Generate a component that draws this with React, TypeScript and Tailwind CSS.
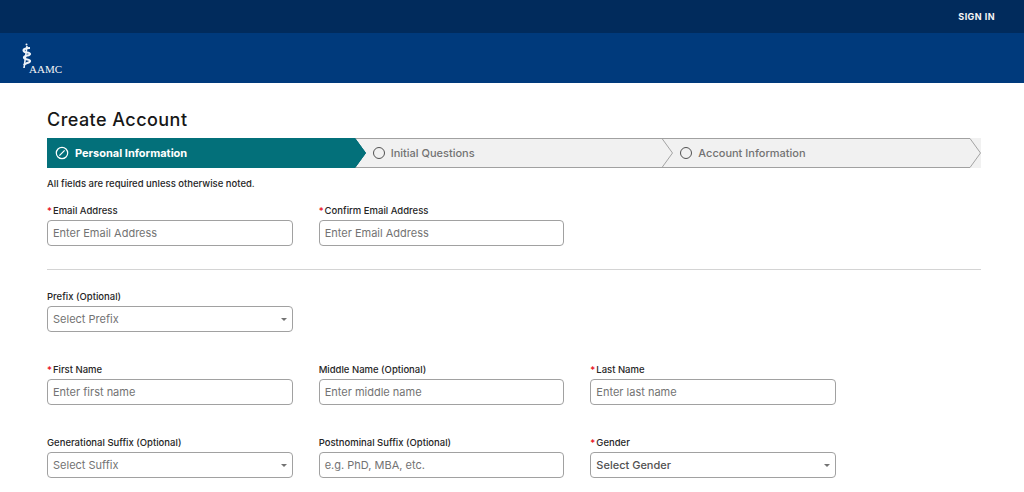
type FieldProps = {
  label: string
  placeholder: string
  required?: boolean
  select?: boolean
  strong?: boolean
}

function Field({ label, placeholder, required, select, strong }: FieldProps) {
  return (
    <div className="flex flex-col gap-0.75">
      <label className="h-3 text-[9.5px] leading-3 font-medium text-neutral-800">
        {required && <span className="mr-px text-red-600">*</span>}
        {label}
      </label>
      <div className="flex h-6.5 items-center justify-between rounded-sm border border-neutral-400 bg-white pr-1.25 pl-1.25">
        <span className={strong ? "text-[11px] font-medium text-neutral-600" : "text-[11px] text-neutral-500"}>{placeholder}</span>
        {select && <span className="h-0 w-0 border-x-[3px] border-t-[3px] border-x-transparent border-t-neutral-500" />}
      </div>
    </div>
  )
}

function Chevron({ fill, stroke }: { fill: string; stroke: string }) {
  return (
    <svg viewBox="0 0 11 30" className="absolute top-0 right-0 h-7.5 w-2.75 translate-x-full" preserveAspectRatio="none">
      <path d="M0 0 L11 15 L0 30 Z" fill={fill} />
      <path d="M0 0.5 L10.5 15 L0 29.5" fill="none" stroke={stroke} strokeWidth="1" />
    </svg>
  )
}

function Step({ label, active }: { label: string; active?: boolean }) {
  if (active) {
    return (
      <div className="relative z-10 flex items-center gap-1.5 bg-[#03707a] pl-2 text-white">
        <svg viewBox="0 0 16 16" className="h-3.5 w-3.5" fill="none" stroke="currentColor" strokeWidth="1.4">
          <circle cx="8" cy="8" r="6.5" />
          <path d="M5 11 L11 5" />
        </svg>
        <span className="text-[11px] font-bold">{label}</span>
        <Chevron fill="#03707a" stroke="#03707a" />
      </div>
    )
  }
  return (
    <div className="relative flex items-center gap-1.5 border-y border-neutral-400 pl-4.5 text-neutral-500">
      <span className="h-3 w-3 rounded-full border border-neutral-600" />
      <span className="text-[11px] font-medium">{label}</span>
      <div className="absolute -top-px right-0">
        <Chevron fill="#f1f1f1" stroke="#a3a3a3" />
      </div>
    </div>
  )
}

export default function App() {
  return (
    <div className="h-[492px] overflow-hidden bg-white font-['Inter',sans-serif]">
      <header className="flex h-8.25 items-center justify-end bg-[#012b5c] pr-7.25">
        <span className="text-[9px] font-bold tracking-wider text-neutral-100">SIGN IN</span>
      </header>
      <div className="h-12.5 bg-[#003a7c]">
        <div className="relative h-full w-16 pt-2.5 pl-5.25">
          <svg viewBox="0 0 12 26" className="h-6.5 w-3" fill="none" stroke="#eef3f9">
            <circle cx="5.5" cy="1.5" r="1" fill="#eef3f9" stroke="none" />
            <path d="M9 5 C3 5 2 7 3 8.5 C4 10 9 9 9 11 C9 13 3 12 3 14.5 C3 17 9 16 9 18 C9 20 4 20 3 22" strokeWidth="2.2" />
            <path d="M6 3 L3 25" strokeWidth="1.6" />
          </svg>
          <span className="absolute top-7 left-7.25 font-['Liberation_Serif',serif] text-[11px] text-neutral-100">AAMC</span>
        </div>
      </div>

      <main className="pt-5.75 pr-10.75 pl-11.75">
        <h1 className="text-lg leading-7 font-medium tracking-wide text-neutral-900">Create Account</h1>
        <div className="mt-1 grid h-7.5 grid-cols-3 bg-[#f1f1f1] pr-2.75">
          <Step label="Personal Information" active />
          <Step label="Initial Questions" />
          <Step label="Account Information" />
        </div>
        <p className="mt-2.25 text-[9.5px] font-medium text-neutral-800">All fields are required unless otherwise noted.</p>

        <div className="mt-3.5 grid w-[789px] grid-cols-3 gap-x-6.5">
          <Field label="Email Address" placeholder="Enter Email Address" required />
          <Field label="Confirm Email Address" placeholder="Enter Email Address" required />
        </div>

        <hr className="mt-5.75 border-neutral-300" />

        <div className="mt-5.25 grid w-[789px] grid-cols-3 gap-x-6.5 gap-y-8">
          <Field label="Prefix (Optional)" placeholder="Select Prefix" select />
          <div className="col-span-2" />
          <Field label="First Name" placeholder="Enter first name" required />
          <Field label="Middle Name (Optional)" placeholder="Enter middle name" />
          <Field label="Last Name" placeholder="Enter last name" required />
          <Field label="Generational Suffix (Optional)" placeholder="Select Suffix" select />
          <Field label="Postnominal Suffix (Optional)" placeholder="e.g. PhD, MBA, etc." />
          <Field label="Gender" placeholder="Select Gender" required select strong />
        </div>
      </main>
    </div>
  )
}
